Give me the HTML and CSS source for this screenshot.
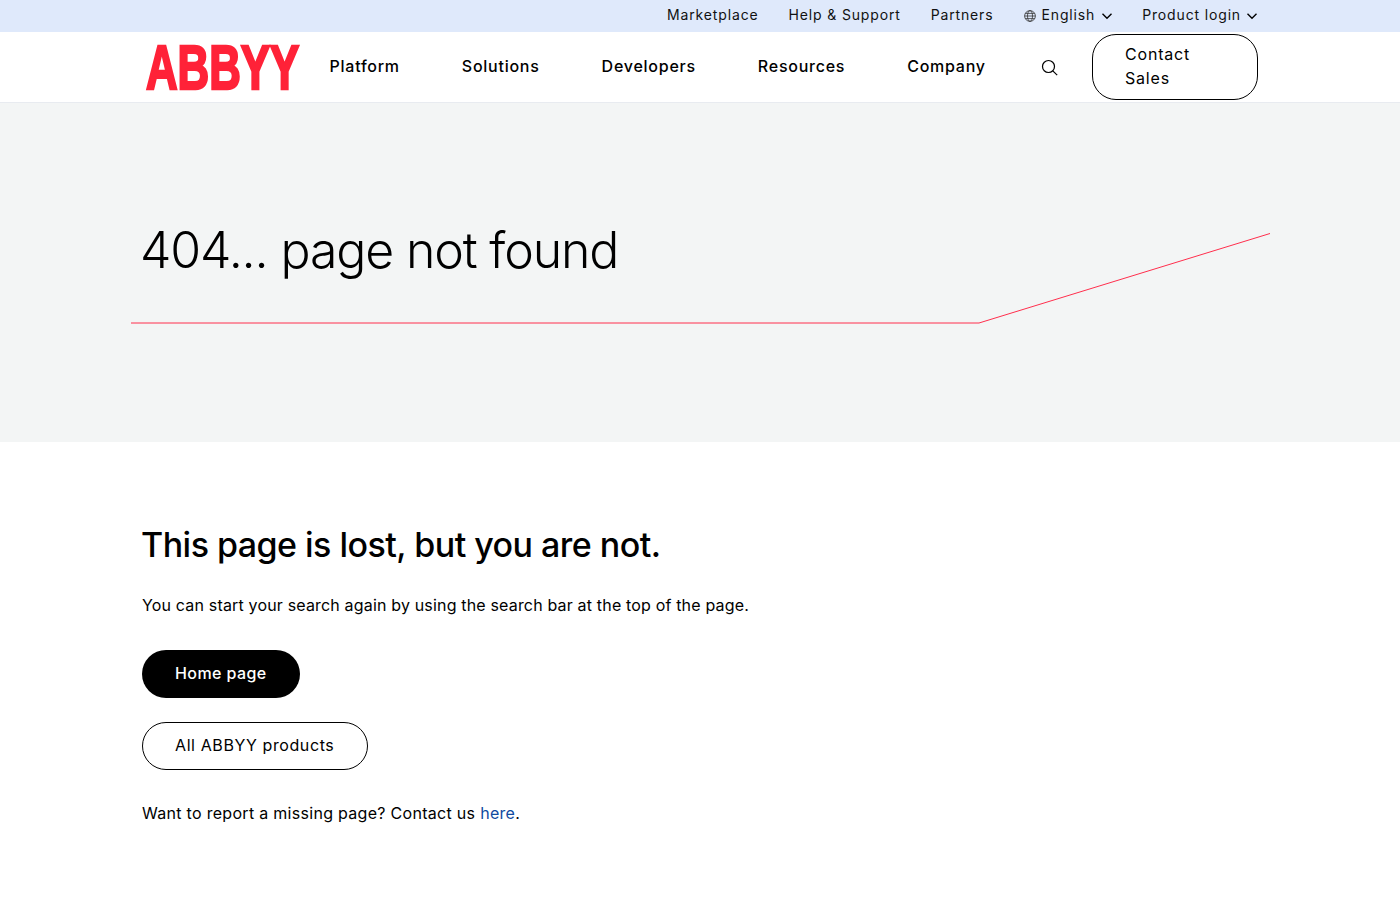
FILE: index.html
```html
<!DOCTYPE html>
<html lang="en">
<head>
    <meta charset="UTF-8">
    <meta name="viewport" content="width=device-width, initial-scale=1.0">
    <title>404 - ABBYY</title>
    <link rel="stylesheet" href="styles.css">
</head>
<body>
    <div class="topbar">
        <div class="container topbar-inner">
            <a class="top-link">Marketplace</a>
            <a class="top-link">Help &amp; Support</a>
            <a class="top-link">Partners</a>
            <a class="top-link top-lang">
                <svg class="globe" width="12" height="12" viewBox="0 0 12 12" fill="none" stroke="#333" stroke-width="0.8">
                    <circle cx="6" cy="6" r="5.4"/>
                    <ellipse cx="6" cy="6" rx="2.5" ry="5.4"/>
                    <path d="M0.6 6h10.8M1.3 3.4h9.4M1.3 8.6h9.4"/>
                </svg>
                English
                <svg class="chevron" width="12" height="8" viewBox="0 0 12 8" fill="none" stroke="#000" stroke-width="1.4"><path d="M1.5 1.8 6 6.2l4.5-4.4"/></svg>
            </a>
            <a class="top-link top-login">
                Product login
                <svg class="chevron" width="12" height="8" viewBox="0 0 12 8" fill="none" stroke="#000" stroke-width="1.4"><path d="M1.5 1.8 6 6.2l4.5-4.4"/></svg>
            </a>
        </div>
    </div>

    <header class="nav">
        <div class="nav-inner">
            <div class="logo"><span class="logo-text">ABBYY</span></div>
            <nav class="nav-links">
                <a>Platform</a>
                <a>Solutions</a>
                <a>Developers</a>
                <a>Resources</a>
                <a>Company</a>
            </nav>
            <svg class="search" width="17" height="17" viewBox="0 0 17 17" fill="none" stroke="#000" stroke-width="1.2">
                <circle cx="7.5" cy="7.5" r="6"/>
                <path d="M11.8 11.8 16.2 16.2"/>
            </svg>
            <a class="contact">Contact Sales</a>
        </div>
    </header>

    <section class="hero">
        <div class="container">
            <h1>404... page not found</h1>
        </div>
        <svg class="hero-line" width="1141" height="92" viewBox="0 0 1141 92" fill="none" stroke="#ff2e4c" stroke-width="1">
            <path d="M0 90H848L1139 0.5"/>
        </svg>
    </section>

    <main class="container content">
        <h2>This page is lost, but you are not.</h2>
        <p class="lead">You can start your search again by using the search bar at the top of the page.</p>
        <a class="btn btn-dark">Home page</a>
        <a class="btn btn-outline">All ABBYY products</a>
        <p class="report">Want to report a missing page? Contact us <a class="here">here</a>.</p>
    </main>
</body>
</html>
```

FILE: styles.css
```css
body {
    font-family: Inter, "Liberation Sans", sans-serif;
    margin: 0;
    padding: 0;
    background-color: #fff;
    color: #000;
}
.container {
    width: 1116px;
    margin: 0 auto;
}
.topbar {
    height: 32px;
    background-color: #dfe9fb;
}
.topbar-inner {
    display: flex;
    justify-content: flex-end;
    align-items: center;
    gap: 30px;
    height: 29px;
}
.top-link {
    display: flex;
    align-items: center;
    font-size: 14px;
    letter-spacing: 0.85px;
    color: #111;
}
.top-login {
    margin-left: -1px;
}
.top-login .chevron {
    margin-left: 5px;
}
.globe {
    margin-right: 6px;
    margin-top: 2px;
}
.chevron {
    margin-left: 6px;
    margin-top: 3px;
}
.nav {
    height: 70px;
    border-bottom: 1px solid #e8ebf0;
}
.nav-inner {
    display: flex;
    align-items: center;
    width: 1112px;
    height: 68px;
    margin-left: 146px;
}
.logo {
    flex: none;
    width: 154px;
    height: 50px;
    margin-top: 2px;
}
.logo-text {
    display: block;
    width: 220px;
    font-family: "Liberation Sans", sans-serif;
    font-weight: 700;
    font-size: 63px;
    line-height: 50px;
    white-space: nowrap;
    color: #ff2238;
    -webkit-text-stroke: 2.5px #ff2238;
    transform: scaleX(0.695);
    transform-origin: left center;
}
.nav-links {
    display: flex;
    gap: 62px;
    margin-left: 29.5px;
}
.nav-links a {
    font-size: 16px;
    font-weight: 500;
    letter-spacing: 0.75px;
}
.search {
    margin-left: 55px;
    margin-top: 2px;
}
.contact {
    box-sizing: border-box;
    width: 166px;
    height: 66px;
    margin-left: auto;
    margin-top: 2px;
    padding: 7px 40px 0 32px;
    border: 1px solid #000;
    border-radius: 24px;
    font-size: 16px;
    font-weight: 400;
    line-height: 24px;
    letter-spacing: 0.8px;
}
.hero {
    position: relative;
    height: 339px;
    background-color: #f3f5f5;
}
.hero h1 {
    margin: 0 0 0 -2px;
    padding-top: 116px;
    font-size: 50px;
    font-weight: 300;
    line-height: 62px;
    letter-spacing: -1.15px;
}
.hero-line {
    position: absolute;
    left: 131px;
    top: 130px;
}
.content {
    padding-top: 79px;
}
.content h2 {
    margin: 0 0 24px -1px;
    font-size: 34px;
    font-weight: 500;
    line-height: 48px;
    letter-spacing: -0.53px;
}
.lead {
    margin: 0 0 33px;
    font-size: 16px;
    font-weight: 430;
    line-height: 24px;
    letter-spacing: 0.17px;
}
.btn {
    display: table;
    box-sizing: border-box;
    height: 48px;
    margin-bottom: 24px;
    padding: 0 33px;
    border-radius: 24px;
    font-size: 16px;
    font-weight: 500;
    line-height: 46px;
    letter-spacing: 0.4px;
}
.btn-dark {
    background-color: #000;
    color: #fff;
}
.btn-outline {
    border: 1px solid #000;
    padding: 0 33px 0 32px;
    font-weight: 400;
    line-height: 44px;
    letter-spacing: 0.6px;
}
.report {
    margin: 0;
    padding-top: 7px;
    font-size: 16px;
    font-weight: 430;
    line-height: 24px;
    letter-spacing: 0.295px;
}
.here {
    color: #0f4a9f;
}
```
